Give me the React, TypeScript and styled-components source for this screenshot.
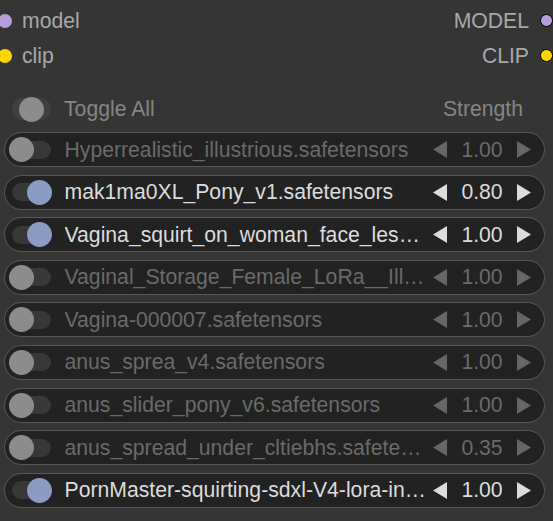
import React from "react";
import styled, { createGlobalStyle } from "styled-components";

const Global = createGlobalStyle`
  html, body { margin: 0; padding: 0; background: #353535; }
  body { font-family: "Liberation Sans", Arial, sans-serif; overflow: hidden; }
`;

const Node = styled.div`
  width: 553px;
  height: 521px;
  display: flex;
  flex-direction: column;
  padding-top: 3px;
  box-sizing: border-box;
`;

const IORow = styled.div`
  height: 35px;
  display: flex;
  align-items: center;
  justify-content: space-between;
  font-size: 21.2px;
  color: #a8a8a8;
`;

const Port = styled.div`
  display: flex;
  align-items: center;
  gap: 10px;
`;

const Dot = styled.span<{ $color: string; $outlined?: boolean }>`
  width: ${(p) => (p.$outlined ? 11 : 14)}px;
  height: ${(p) => (p.$outlined ? 11 : 14)}px;
  border-radius: 50%;
  background: ${(p) => p.$color};
  border: ${(p) => (p.$outlined ? "1.5px solid #000" : "none")};
  flex: none;
`;

const LeftPort = styled(Port)`
  margin-left: -2px;
`;

const RightPort = styled(Port)`
  gap: 11px;
`;

const Header = styled.div`
  margin-top: 24px;
  height: 24px;
  display: flex;
  align-items: center;
  font-size: 21.2px;
  color: #858585;
  padding: 0 30px 0 12px;
`;

const HeaderLabel = styled.span`
  margin-left: 13px;
  flex: 1;
`;

const Track = styled.div<{ $header?: boolean }>`
  position: relative;
  width: 39px;
  height: ${(p) => (p.$header ? 22 : 18)}px;
  border-radius: 11px;
  background: ${(p) => (p.$header ? "#404040" : "#383838")};
  flex: none;
`;

const Knob = styled.div<{ $on: boolean }>`
  position: absolute;
  top: 50%;
  left: ${(p) => (p.$on ? 15 : -3)}px;
  width: 25px;
  height: 25px;
  margin-top: -12.5px;
  border-radius: 50%;
  background: ${(p) => (p.$on ? "#8a9bc4" : "#8c8c8c")};
`;

const HeaderKnob = styled(Knob)`
  left: 7px;
  background: #8c8c8c;
`;

const List = styled.div`
  margin-top: 11px;
  display: flex;
  flex-direction: column;
  gap: 7.6px;
  padding: 0 8px 0 4px;
`;

const Row = styled.div<{ $on: boolean }>`
  height: 35px;
  box-sizing: border-box;
  border: 1.5px solid #585858;
  border-radius: 18px;
  background: #222222;
  display: flex;
  align-items: center;
  padding: 0 13px 0 7px;
  font-size: 21.2px;
  color: ${(p) => (p.$on ? "#dcdcdc" : "#6a6a6a")};
`;

const Name = styled.span`
  margin-left: 13.5px;
  flex: 1;
  min-width: 0;
  white-space: nowrap;
  overflow: hidden;
`;

const Strength = styled.div`
  display: flex;
  align-items: center;
  flex: none;
`;

const Arrow = styled.svg`
  width: 14px;
  height: 17px;
  flex: none;
`;

const Value = styled.span`
  width: 70px;
  text-align: center;
`;

type Lora = { name: string; on: boolean; value: string };

const loras: Lora[] = [
  { name: "Hyperrealistic_illustrious.safetensors", on: false, value: "1.00" },
  { name: "mak1ma0XL_Pony_v1.safetensors", on: true, value: "0.80" },
  { name: "Vagina_squirt_on_woman_face_les…", on: true, value: "1.00" },
  { name: "Vaginal_Storage_Female_LoRa__Ill…", on: false, value: "1.00" },
  { name: "Vagina-000007.safetensors", on: false, value: "1.00" },
  { name: "anus_sprea_v4.safetensors", on: false, value: "1.00" },
  { name: "anus_slider_pony_v6.safetensors", on: false, value: "1.00" },
  { name: "anus_spread_under_cltiebhs.safete…", on: false, value: "0.35" },
  { name: "PornMaster-squirting-sdxl-V4-lora-in…", on: true, value: "1.00" },
];

function LoraRow({ lora }: { lora: Lora }) {
  const c = lora.on ? "#dcdcdc" : "#666666";
  return (
    <Row $on={lora.on}>
      <Track>
        <Knob $on={lora.on} />
      </Track>
      <Name>{lora.name}</Name>
      <Strength>
        <Arrow viewBox="0 0 14 17">
          <polygon points="14,0 14,17 0,8.5" fill={c} />
        </Arrow>
        <Value>{lora.value}</Value>
        <Arrow viewBox="0 0 14 17">
          <polygon points="0,0 0,17 14,8.5" fill={c} />
        </Arrow>
      </Strength>
    </Row>
  );
}

export default function App() {
  return (
    <>
      <Global />
      <Node>
        <IORow>
          <LeftPort>
            <Dot $color="#b39ddb" />
            <span>model</span>
          </LeftPort>
          <RightPort>
            <span>MODEL</span>
            <Dot $color="#b39ddb" $outlined />
          </RightPort>
        </IORow>
        <IORow>
          <LeftPort>
            <Dot $color="#ffd500" />
            <span>clip</span>
          </LeftPort>
          <RightPort>
            <span>CLIP</span>
            <Dot $color="#ffd500" $outlined />
          </RightPort>
        </IORow>
        <Header>
          <Track $header>
            <HeaderKnob $on={false} />
          </Track>
          <HeaderLabel>Toggle All</HeaderLabel>
          <span>Strength</span>
        </Header>
        <List>
          {loras.map((l, i) => (
            <LoraRow key={i} lora={l} />
          ))}
        </List>
      </Node>
    </>
  );
}
